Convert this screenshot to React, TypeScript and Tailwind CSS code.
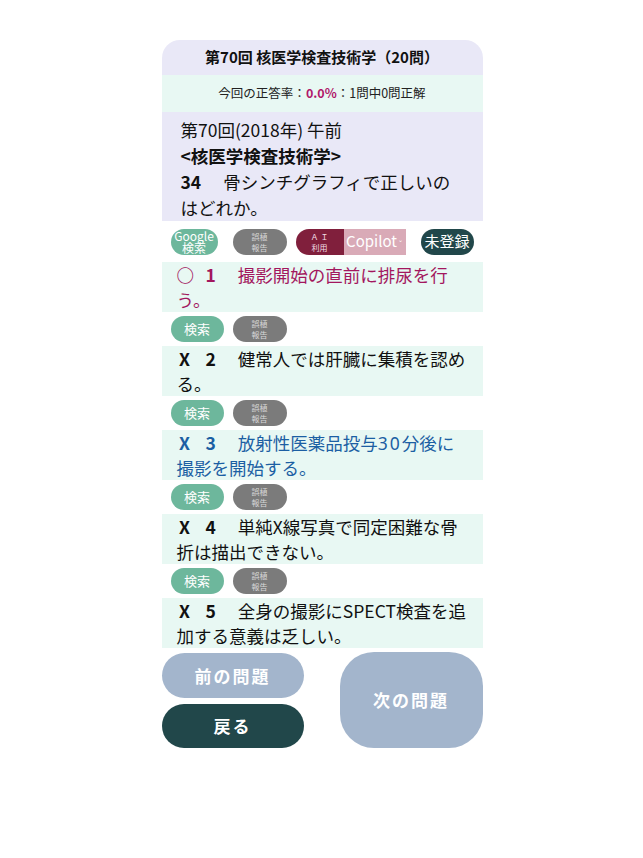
import React from 'react'

const FONT = '"Noto Sans CJK JP", "Noto Sans", sans-serif'

type Choice = { mark: string; num: number; text: React.ReactNode; color: string }

const CHOICES: Choice[] = [
  { mark: '○', num: 1, text: '撮影開始の直前に排尿を行う。', color: 'text-[#a3175e]' },
  { mark: 'X', num: 2, text: '健常人では肝臓に集積を認める。', color: 'text-[#111]' },
  {
    mark: 'X',
    num: 3,
    text: (
      <>
        放射性医薬品投与<span className="font-['Noto_Sans'] tracking-[2px] leading-none">30</span>分後に撮影を開始する。
      </>
    ),
    color: 'text-[#1c5fa3]',
  },
  { mark: 'X', num: 4, text: '単純X線写真で同定困難な骨折は描出できない。', color: 'text-[#111]' },
  { mark: 'X', num: 5, text: '全身の撮影にSPECT検査を追加する意義は乏しい。', color: 'text-[#111]' },
]

function TypoButton() {
  return (
    <div className="w-[54px] h-[26px] rounded-full bg-[#7b7b7b] flex flex-col items-center justify-center text-[8px] leading-[11px] text-[#d8d8d8]">
      <span>誤植</span>
      <span>報告</span>
    </div>
  )
}

function SearchButton() {
  return (
    <div className="w-[53px] h-[26px] rounded-full bg-[#6db79c] flex items-center justify-center text-[13px] text-white">
      検索
    </div>
  )
}

export default function App() {
  return (
    <div className="w-[643px] h-[858px] bg-white flex justify-center" style={{ fontFamily: FONT }}>
      <div className="w-[321px] mt-[40px] ml-[1px]">
        <div className="h-[35px] rounded-t-[18px] bg-[#e9e8f7] flex items-center justify-center text-[15px] font-bold text-[#111]">
          第70回 核医学検査技術学（20問）
        </div>
        <div className="h-[37px] bg-[#e8f8f3] flex items-center justify-center text-[12.5px] text-[#222]">
          今回の正答率：<span className="font-bold text-[#b0186a]">0.0%</span>：1問中0問正解
        </div>
        <div className="bg-[#e9e8f7] pl-[19px] pr-[24px] pt-[5px] text-[17.5px] leading-[26px] text-[#111]">
          <div>第70回(2018年) 午前</div>
          <div className="font-bold">&lt;核医学検査技術学&gt;</div>
          <div>
            <span className="font-bold">34</span>
            <span className="ml-[22px]">骨シンチグラフィで正しいのはどれか。</span>
          </div>
        </div>

        <div className="flex items-center h-[41px] pl-[9px]">
          <div className="w-[47px] h-[26px] rounded-full bg-[#6db79c] flex flex-col items-center justify-center text-[12px] leading-[12px] text-white">
            <span>Google</span>
            <span>検索</span>
          </div>
          <div className="ml-[15px]">
            <TypoButton />
          </div>
          <div className="ml-[9px] flex h-[26px]">
            <div className="w-[48px] rounded-l-full bg-[#801f3c] flex flex-col items-center justify-center text-[8px] leading-[11px] text-[#f0dde3]">
              <span>Ａ Ｉ</span>
              <span>利用</span>
            </div>
            <div className="w-[62px] bg-[#d9aab7] flex items-center justify-center text-[15px] text-white">
              Copilot<span className="text-[6px] ml-[1px] mt-[-4px]">⌄</span>
            </div>
          </div>
          <div className="ml-[15px] w-[53px] h-[26px] rounded-full bg-[#21474a] flex items-center justify-center text-[15px] text-white">
            未登録
          </div>
        </div>

        {CHOICES.map((c, i) => (
          <div key={c.num}>
            <div className={`bg-[#e8f8f3] pl-[15px] pr-[15px] text-[17.5px] leading-[25px] ${c.color}`}>
              <span className="font-bold inline-block w-[16px] text-center">{c.mark}</span>
              <span className="font-bold ml-[13px]">{c.num}</span>
              <span className="ml-[22px]">{c.text}</span>
            </div>
            {i < CHOICES.length - 1 && (
              <div className="flex items-center gap-[9px] h-[34px] pl-[9px]">
                <SearchButton />
                <TypoButton />
              </div>
            )}
          </div>
        ))}

        <div className="flex justify-between mt-[4px]">
          <div className="flex flex-col gap-[6px] pt-[1px]">
            <div className="w-[142px] h-[45px] rounded-full bg-[#a3b5cc] flex items-center justify-center text-[17px] font-bold text-white tracking-[2px]">
              前の問題
            </div>
            <div className="w-[142px] h-[44px] rounded-full bg-[#21474a] flex items-center justify-center text-[17px] font-bold text-white tracking-[2px]">
              戻る
            </div>
          </div>
          <div className="w-[143px] h-[96px] rounded-[34px] bg-[#a3b5cc] flex items-center justify-center text-[17px] font-bold text-white tracking-[2px]">
            次の問題
          </div>
        </div>
      </div>
    </div>
  )
}
